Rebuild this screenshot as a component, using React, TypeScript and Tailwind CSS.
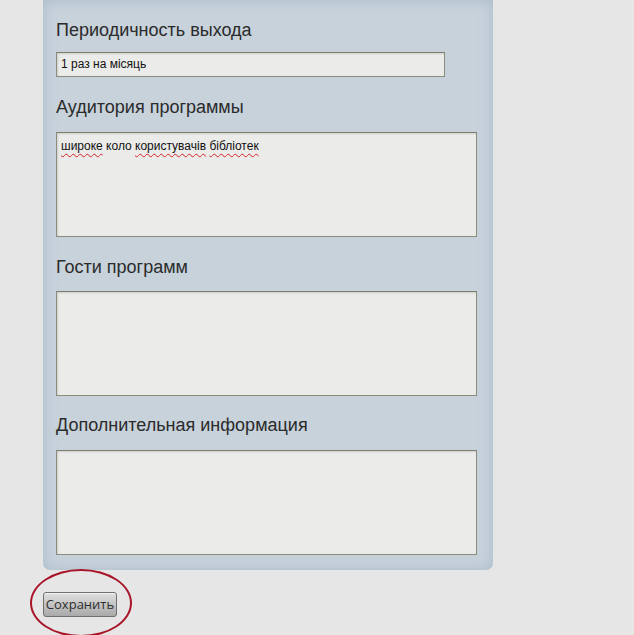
export default function App() {
  const boxCls =
    "bg-[#ebebe9] border border-[#8c8c7c] border-t-[#7d7d6d] shadow-[inset_1px_1px_2px_rgba(0,0,0,0.12)]";
  const labelCls = "h-[22px] leading-[22px] text-[18px] text-[#2b2b2b]";
  const wavy = "underline decoration-wavy decoration-[#d4252a] decoration-1 underline-offset-[3px]";

  return (
    <div
      className="min-h-[635px] w-full bg-[#e6e6e6] pl-[43px] overflow-hidden"
      style={{ fontFamily: '"Liberation Sans", Arial, sans-serif' }}
    >
      <div className="w-[450px] h-[570px] rounded-b-[7px] bg-[#c7d2db] shadow-[inset_0_0_14px_rgba(150,172,192,0.55)] pl-[13px] pt-[19px] flex flex-col">
        <div className={labelCls}>Периодичность выхода</div>
        <div className={`${boxCls} mt-[11px] w-[389px] h-[25px] pl-[4px] text-[12px] leading-[23px] text-[#111]`}>
          1 раз на місяць
        </div>

        <div className={`${labelCls} mt-[19px]`}>Аудитория программы</div>
        <div className={`${boxCls} mt-[14px] w-[421px] h-[105px] pl-[4px] pt-[6px] text-[12px] leading-[15px] text-[#111]`}>
          <span className={wavy}>широке</span> коло <span className={wavy}>користувачів</span>{" "}
          <span className={wavy}>бібліотек</span>
        </div>

        <div className={`${labelCls} mt-[19px]`}>Гости программ</div>
        <div className={`${boxCls} mt-[13px] w-[421px] h-[105px]`} />

        <div className={`${labelCls} mt-[18px]`}>Дополнительная информация</div>
        <div className={`${boxCls} mt-[14px] w-[421px] h-[105px]`} />
      </div>

      <div className="relative mt-[22px] w-[74px] h-[25px]">
        <button
          className="w-[74px] h-[25px] rounded-[3px] border border-[#6f6f6f] bg-gradient-to-b from-[#e0e0e0] via-[#c4c4c4] to-[#a9a9a9] text-[13px] text-[#2e2e2e] shadow-[inset_0_1px_0_rgba(255,255,255,0.6)]"
          style={{ fontFamily: '"Open Sans", "DejaVu Sans", sans-serif' }}
        >
          Сохранить
        </button>
        <div className="absolute left-[-13px] top-[-23px] w-[102px] h-[68px] rounded-[50%] border-[2.5px] border-[#a91528] pointer-events-none" />
      </div>
    </div>
  );
}
